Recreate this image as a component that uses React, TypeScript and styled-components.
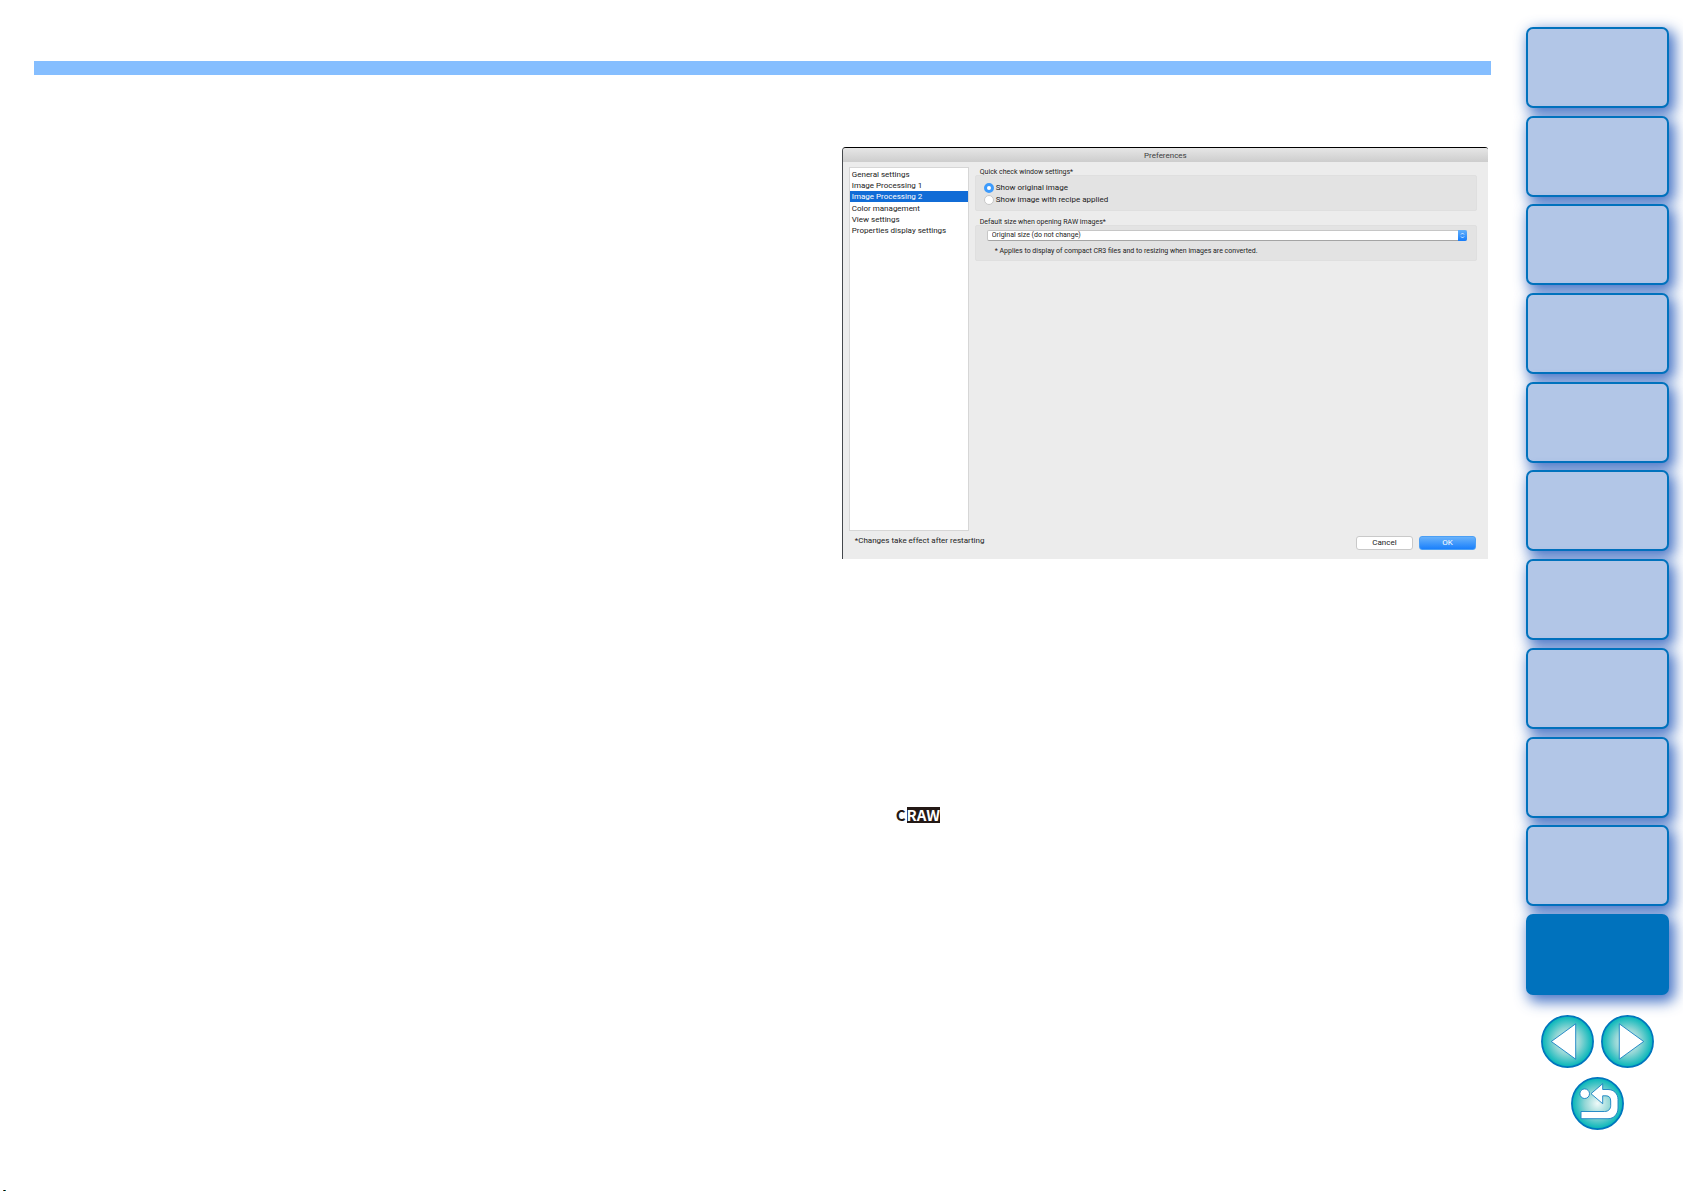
import React, { useState } from "react";
import styled, { createGlobalStyle } from "styled-components";

const GlobalStyle = createGlobalStyle`
  * { box-sizing: border-box; }
  body { margin: 0; background: #fff; }
  button, select, input { font: inherit; color: inherit; margin: 0; }
`;

const Page = styled.div`
  display: flex;
  flex-direction: column;
  min-height: 100vh;
  font-family: Roboto, Inter, "Liberation Sans", sans-serif;
  color: #222;
`;

const Columns = styled.div`
  display: flex;
  gap: 35px;
  padding: 27px 14px 0 34px;
`;

const Main = styled.main`
  flex: 1;
  min-width: 0;
  padding-top: 34px;
`;

const Rule = styled.div`
  height: 14px;
  background: #85beff;
`;

const Spread = styled.div`
  display: grid;
  grid-template-columns: minmax(0, 5fr) minmax(0, 4fr);
  padding: 72px 3px 0 0;
`;

const RightPage = styled.div`
  grid-column: 2;
`;

const Dialog = styled.section`
  border: solid #000;
  border-width: 1px 0 0 1px;
  border-left-color: #45484c;
  border-radius: 4px 3px 0 0;
  background: #ececec;
  overflow: hidden;
`;

const TitleBar = styled.h1`
  margin: 0;
  height: 14px;
  font-size: 8px;
  line-height: 15px;
  font-weight: 400;
  text-align: center;
  color: #3c3c3c;
  background: linear-gradient(#e6e6e6, #cdcdcd);
`;

const Body = styled.div`
  display: flex;
  gap: 6px;
  padding: 5px 11px 0 6px;
`;

const Categories = styled.div`
  display: flex;
  flex-direction: column;
  flex: 0 0 120px;
  min-height: 364px;
  border: 1px solid #d6d6d6;
  background: #fff;
`;

const Category = styled.button<{ $active: boolean }>`
  height: 11px;
  padding: 0 0 0 2px;
  border: 0;
  text-align: left;
  white-space: nowrap;
  font-size: 8px;
  line-height: 11px;
  color: ${(p) => (p.$active ? "#fff" : "#222")};
  background: ${(p) => (p.$active ? "#116cd6" : "transparent")};

  &:nth-child(3n + 1) { height: 12px; }
`;

const Settings = styled.div`
  flex: 1;
  min-width: 0;
`;

const Group = styled.fieldset`
  min-width: 0;
  margin: 0 0 6px;
  padding: 0;
  border: 0;
`;

const GroupTitle = styled.legend`
  display: block;
  padding: 0 0 0 5px;
  height: 8px;
  font-size: 7px;
  line-height: 10px;
`;

const GroupBox = styled.div`
  height: 36px;
  border: 1px solid #dfdfdf;
  border-radius: 2px;
  background: #e3e3e3;
`;

const RadioRow = styled.label`
  display: flex;
  align-items: center;
  gap: 2px;
  height: 12px;
  margin-left: 8px;
  font-size: 8px;
  line-height: 12px;
`;

const RadioBox = styled(GroupBox)`
  padding-top: 6px;
`;

const Radio = styled.input`
  appearance: none;
  width: 10px;
  height: 10px;
  border: 1px solid #c8c8c8;
  border-radius: 50%;
  background: #fff;

  &:checked {
    border: 3px solid #3d9bfc;
  }
`;

const SelectBox = styled(GroupBox)`
  padding: 4px 9px 0 11px;
`;

const SelectFrame = styled.div`
  position: relative;
  height: 11px;
`;

const Select = styled.select`
  appearance: none;
  display: block;
  width: 100%;
  height: 11px;
  padding: 0 10px 0 4px;
  border: 1px solid #c6c6c6;
  border-bottom-color: #a4a4a4;
  border-radius: 2px;
  background: #fff;
  font-size: 7px;
  line-height: 9px;
`;

const Stepper = styled.svg`
  position: absolute;
  top: 0;
  right: 0;
  width: 9px;
  height: 11px;
  border-radius: 0 2px 2px 0;
  background: linear-gradient(#63b0fa, #157cfb);
  pointer-events: none;
`;

const Note = styled.p`
  margin: 5px 0 0 8px;
  font-size: 7px;
  line-height: 10px;
  white-space: nowrap;
`;

const Footer = styled.footer`
  display: flex;
  align-items: flex-start;
  gap: 6px;
  height: 28px;
  padding: 5px 12px 0;
`;

const FooterText = styled.span`
  flex: 1;
  font-size: 8px;
  line-height: 10px;
`;

const DialogButton = styled.button<{ $primary?: boolean }>`
  width: 57px;
  height: 14px;
  padding: 0;
  border: 1px solid ${(p) => (p.$primary ? "#4b9ff5" : "#c9c9c9")};
  border-radius: 3px;
  font-size: 8px;
  line-height: 12px;
  color: ${(p) => (p.$primary ? "#fff" : "#222")};
  background: ${(p) => (p.$primary ? "linear-gradient(#69b2fa, #1a80fc)" : "#fff")};
`;

const FormatBadge = styled.div`
  display: flex;
  align-items: center;
  gap: 1px;
  margin: 248px 0 0 54px;
  color: #231815;
  font-family: "Noto Sans CJK JP", sans-serif;
  font-weight: 700;
  font-size: 15px;
  line-height: 16px;
`;

const FormatName = styled.span`
  color: #fff;
  background: #231815;
`;

const Sidebar = styled.aside`
  flex: 0 0 143px;
`;

const Chapters = styled.nav`
  display: flex;
  flex-direction: column;
  justify-content: space-between;
  min-height: 968px;
`;

const Chapter = styled.a<{ $current: boolean }>`
  display: block;
  height: 81px;
  border: 2px solid #0072bd;
  border-radius: 7px;
  background: ${(p) => (p.$current ? "#0072bd" : "#b2c6e7")};
  box-shadow: 4px 5px 14px 2px rgba(30, 85, 185, 0.8);
`;

const Pager = styled.nav`
  display: flex;
  flex-wrap: wrap;
  justify-content: center;
  gap: 9px 7px;
  padding: 20px 12px 0;
`;

const RoundLink = styled.a`
  display: block;
  width: 53px;
  height: 53px;
`;

const RoundSvg = styled.svg`
  display: block;
  width: 100%;
  height: 100%;
`;

const PrintMark = styled.div`
  width: 3px;
  height: 1px;
  margin: auto 0 0 3px;
  background: linear-gradient(90deg, #b07a20, #000 50%, #00b7d8);
`;

function RoundIcon({ id, path, dot }: { id: string; path: string; dot?: boolean }) {
  return (
    <RoundSvg viewBox="0 0 53 53" aria-hidden="true">
      <defs>
        <radialGradient id={id}>
          <stop offset="0" stopColor="#f0faf9" />
          <stop offset="0.5" stopColor="#91d6d5" />
          <stop offset="1" stopColor="#00b5b8" />
        </radialGradient>
      </defs>
      <circle cx="26.5" cy="26.5" r="25.6" fill={`url(#${id})`} stroke="#0075bd" strokeWidth="1.7" />
      <g fill="#fff" stroke="#1580c2" strokeWidth="0.9">
        {dot && <circle cx="13.7" cy="16.7" r="4.8" />}
        <path d={path} />
      </g>
    </RoundSvg>
  );
}

const categories = [
  "General settings",
  "Image Processing 1",
  "Image Processing 2",
  "Color management",
  "View settings",
  "Properties display settings",
];

const chapterCount = 11;

export default function App() {
  const [category, setCategory] = useState(2);
  const [mode, setMode] = useState("original");

  return (
    <Page>
      <GlobalStyle />
      <Columns>
        <Main>
          <Rule />
          <Spread>
            <RightPage>
              <Dialog aria-labelledby="dialog-title">
                <TitleBar id="dialog-title">Preferences</TitleBar>
                <Body>
                  <Categories>
                    {categories.map((name, i) => (
                      <Category key={name} $active={i === category} onClick={() => setCategory(i)}>
                        {name}
                      </Category>
                    ))}
                  </Categories>
                  <Settings>
                    <Group>
                      <GroupTitle>Quick check window settings*</GroupTitle>
                      <RadioBox>
                        <RadioRow>
                          <Radio
                            type="radio"
                            name="quick-check"
                            checked={mode === "original"}
                            onChange={() => setMode("original")}
                          />
                          Show original image
                        </RadioRow>
                        <RadioRow>
                          <Radio
                            type="radio"
                            name="quick-check"
                            checked={mode === "recipe"}
                            onChange={() => setMode("recipe")}
                          />
                          Show image with recipe applied
                        </RadioRow>
                      </RadioBox>
                    </Group>
                    <Group>
                      <GroupTitle id="raw-size">Default size when opening RAW images*</GroupTitle>
                      <SelectBox>
                        <SelectFrame>
                          <Select aria-labelledby="raw-size">
                            <option>Original size (do not change)</option>
                          </Select>
                          <Stepper viewBox="0 0 9 11" aria-hidden="true">
                            <path d="M3 4.5 4.5 3 6 4.5M3 6.5 4.5 8 6 6.5" fill="none" stroke="#fff" strokeWidth="0.8" />
                          </Stepper>
                        </SelectFrame>
                        <Note>* Applies to display of compact CR3 files and to resizing when images are converted.</Note>
                      </SelectBox>
                    </Group>
                  </Settings>
                </Body>
                <Footer>
                  <FooterText>*Changes take effect after restarting</FooterText>
                  <DialogButton>Cancel</DialogButton>
                  <DialogButton $primary>OK</DialogButton>
                </Footer>
              </Dialog>
              <FormatBadge>
                <span>C</span>
                <FormatName>RAW</FormatName>
              </FormatBadge>
            </RightPage>
          </Spread>
        </Main>
        <Sidebar>
          <Chapters aria-label="Chapters">
            {Array.from({ length: chapterCount }, (_, i) => (
              <Chapter
                key={i}
                href={`#chapter-${i + 1}`}
                aria-label={`Chapter ${i + 1}`}
                $current={i === chapterCount - 1}
              />
            ))}
          </Chapters>
          <Pager aria-label="Pages">
            <RoundLink href="#previous" aria-label="Previous page">
              <RoundIcon id="glow-previous" path="M10.3 26.5 34.7 8.8V44.2Z" />
            </RoundLink>
            <RoundLink href="#next" aria-label="Next page">
              <RoundIcon id="glow-next" path="M42.7 26.5 18.3 8.8V44.2Z" />
            </RoundLink>
            <RoundLink href="#back" aria-label="Back">
              <RoundIcon
                id="glow-back"
                dot
                path="M20 16.7 31.7 6.7V12.5H37C43 12.5 47 17 47 22.5V31C47 37 43 41.7 37 41.7H10V34.5H33.5C37.5 34.5 39.7 32 39.7 28.5V24C39.7 20.5 38 18.8 35 18.8H31.7V26.7Z"
              />
            </RoundLink>
          </Pager>
        </Sidebar>
      </Columns>
      <PrintMark />
    </Page>
  );
}
